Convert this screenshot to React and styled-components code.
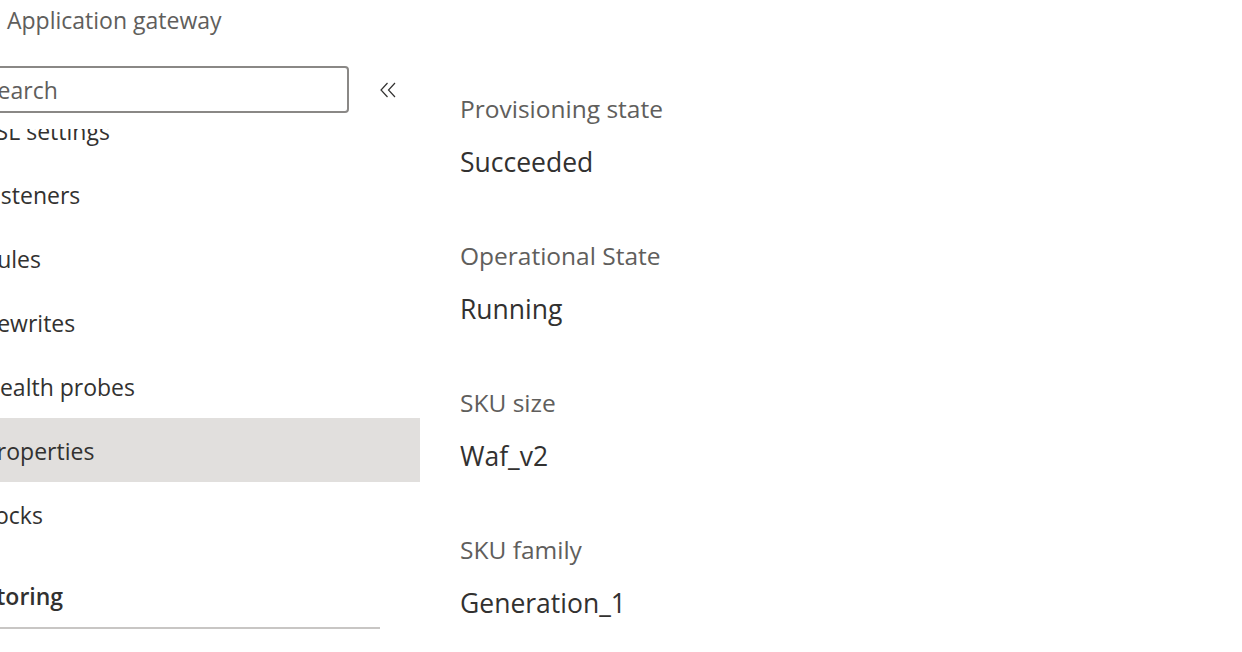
import React from "react";
import styled, { createGlobalStyle } from "styled-components";

const Global = createGlobalStyle`
  html, body { margin: 0; padding: 0; background: #ffffff; }
  body { font-family: "Open Sans", "Noto Sans", sans-serif; color: #323130; overflow: hidden; }
  * { box-sizing: border-box; }
`;

const Page = styled.div`
  width: 1242px;
  height: 652px;
  overflow: hidden;
  display: flex;
  flex-direction: column;
`;

const Header = styled.div`
  height: 56px;
  padding-left: 7px;
  flex: none;
`;

const Subtitle = styled.div`
  font-size: 23px;
  line-height: 40px;
  color: #605e5c;
`;

const Body = styled.div`
  flex: 1;
  display: flex;
  min-height: 0;
`;

const Sidebar = styled.nav`
  width: 480px;
  margin-left: -60px;
  flex: none;
  display: flex;
  flex-direction: column;
  min-height: 0;
`;

const SearchRow = styled.div`
  display: flex;
  align-items: center;
  gap: 31px;
  padding: 10px 24px 16px 0;
  background: #ffffff;
  flex: none;
`;

const SearchBox = styled.div`
  width: 409px;
  height: 47px;
  border: 2px solid #8a8886;
  border-radius: 4px;
  display: flex;
  align-items: center;
  padding-left: 43px;
  font-size: 23px;
  color: #605e5c;
`;

const Collapse = styled.button`
  border: 0;
  background: none;
  padding: 0;
  width: 16px;
  height: 16px;
  display: flex;
  color: #323130;
`;

const Viewport = styled.div`
  flex: 1;
  overflow: hidden;
  min-height: 0;
`;

const List = styled.ul`
  list-style: none;
  margin: -31px 0 0;
  padding: 0;
`;

const Item = styled.li`
  height: 64px;
  display: flex;
  align-items: center;
  padding-left: 43px;
  padding-top: 2px;
  font-size: 23px;
  color: #323130;
  background: ${(p) => (p.$active ? "#e1dfdd" : "transparent")};
`;

const GroupHeader = styled.li`
  margin-right: 40px;
  padding: 34px 0 15px 0;
  line-height: 32px;
  font-size: 23px;
  font-weight: 600;
  color: #323130;
  border-bottom: 2px solid #c8c6c4;
`;

const Content = styled.main`
  flex: 1;
  padding: 37px 0 0 40px;
  display: flex;
  flex-direction: column;
`;

const Field = styled.div`
  display: flex;
  flex-direction: column;
  gap: 19px;
  margin-bottom: 60px;
`;

const Label = styled.div`
  font-size: 24.5px;
  line-height: 32px;
  color: #605e5c;
`;

const Value = styled.div`
  font-size: 26.5px;
  line-height: 36px;
  color: #323130;
`;

const items = [
  "SSL settings",
  "Listeners",
  "Rules",
  "Rewrites",
  "Health probes",
  "Properties",
  "Locks",
];

const fields = [
  ["Provisioning state", "Succeeded"],
  ["Operational State", "Running"],
  ["SKU size", "Waf_v2"],
  ["SKU family", "Generation_1"],
];

export default function App() {
  return (
    <Page>
      <Global />
      <Header>
        <Subtitle>Application gateway</Subtitle>
      </Header>
      <Body>
        <Sidebar>
          <SearchRow>
            <SearchBox>Search</SearchBox>
            <Collapse aria-label="Collapse">
              <svg width="16" height="16" viewBox="0 0 16 16" fill="none">
                <path d="M7.5 1 L1 8 L7.5 15" stroke="currentColor" strokeWidth="1.2" />
                <path d="M15 1 L8.5 8 L15 15" stroke="currentColor" strokeWidth="1.2" />
              </svg>
            </Collapse>
          </SearchRow>
          <Viewport>
            <List>
              {items.map((t) => (
                <Item key={t} $active={t === "Properties"}>
                  {t}
                </Item>
              ))}
              <GroupHeader>Monitoring</GroupHeader>
            </List>
          </Viewport>
        </Sidebar>
        <Content>
          {fields.map(([l, v]) => (
            <Field key={l}>
              <Label>{l}</Label>
              <Value>{v}</Value>
            </Field>
          ))}
        </Content>
      </Body>
    </Page>
  );
}
